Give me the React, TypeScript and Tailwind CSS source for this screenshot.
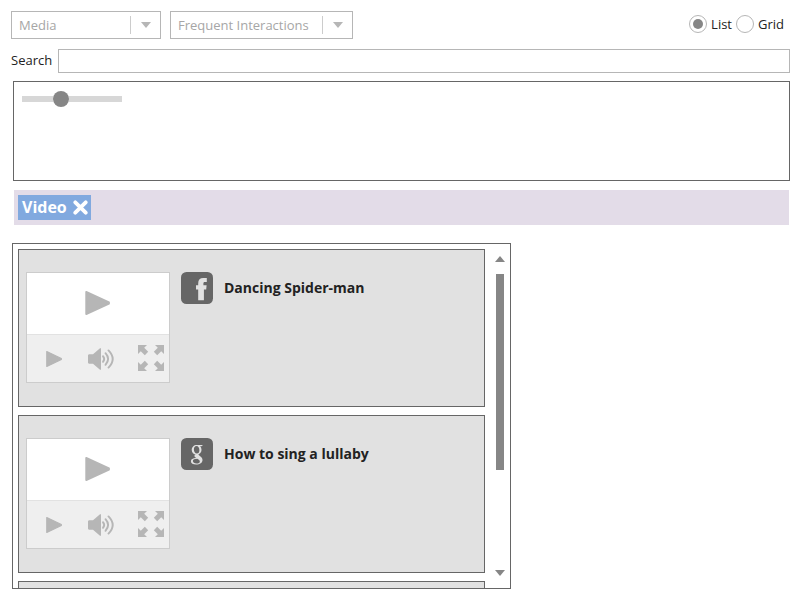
import React from "react";

function Caret({ up = false }: { up?: boolean }) {
  return (
    <svg width="10" height="6" viewBox="0 0 10 6" className="block">
      <path d={up ? "M0 6 5 0l5 6z" : "M0 0h10L5 6z"} fill="currentColor" />
    </svg>
  );
}

function Select({ label, width }: { label: string; width: string }) {
  return (
    <div className={`flex h-7 items-center border border-[#b6b6b6] pl-[7px] pr-[9px] text-[#a6a6a6] ${width}`}>
      <span className="flex-1 whitespace-nowrap">{label}</span>
      <span className="mr-2.5 h-[18px] w-px bg-[#ccc]" />
      <span className="text-[#b6b6b6]">
        <Caret />
      </span>
    </div>
  );
}

function Radio({ label, checked = false }: { label: string; checked?: boolean }) {
  return (
    <div className="flex items-center gap-1">
      <span className="flex h-[18px] w-[18px] items-center justify-center rounded-full border border-[#b6b6b6]">
        {checked && <span className="h-2.5 w-2.5 rounded-full bg-[#868686]" />}
      </span>
      <span>{label}</span>
    </div>
  );
}

function Play({ width, height }: { width: number; height: number }) {
  return (
    <svg width={width} height={height} viewBox="0 0 25 24" preserveAspectRatio="none" className="block">
      <path d="M1.2 0.9v22.2L24 12.7v-1.4z" fill="currentColor" stroke="currentColor" strokeWidth="1.8" strokeLinejoin="round" />
    </svg>
  );
}

function Speaker() {
  return (
    <svg width="27" height="22" viewBox="0 0 27 22" className="block">
      <path d="M0.8 6.2H5L12 0.3h1v21.400h-1L5 15.800H0.8L0 14.800v-7.600z" fill="currentColor" />
      <g fill="none" stroke="currentColor" strokeWidth="1.9" strokeLinecap="round">
        <path d="M15 8.200q2.400 2.800 0 5.600" />
        <path d="M17.500 5.200q5.200 5.800 0 11.600" />
        <path d="M20.500 2.400q8.400 8.600 0 17.200" />
      </g>
    </svg>
  );
}

function Expand() {
  return (
    <svg width="26" height="26" viewBox="0 0 26 26" fill="currentColor" className="block">
      <path d="M0 0h9L6.200 2.800l4 4-3.400 3.400-4-4L0 9z" />
      <path d="M26 0h-9l2.800 2.800-4 4 3.400 3.400 4-4L26 9z" />
      <path d="M0 26h9l-2.800-2.800 4-4-3.400-3.400-4 4L0 17z" />
      <path d="M26 26h-9l2.800-2.800-4-4 3.400-3.400 4 4L26 17z" />
    </svg>
  );
}

function FacebookIcon() {
  return (
    <svg width="32" height="32" viewBox="0 0 32 32" className="block shrink-0">
      <rect width="32" height="32" rx="5.500" fill="#666" />
      <path d="M17.200 28.300V17.500H15v-4.200h2.200v-2C17.200 7.800 19 6 22.200 6H25.800v4h-2c-1.100 0-1.400.5-1.400 1.600v1.700h3.200l-.4 4.200h-2.300v10.800z" fill="#e1e1e1" />
    </svg>
  );
}

function GoogleIcon() {
  return (
    <svg width="32" height="32" viewBox="0 0 32 32" className="block shrink-0">
      <rect width="32" height="32" rx="5.500" fill="#666" />
      <g fill="#e1e1e1" fillRule="evenodd">
        <path d="M15.800 7C12.800 7 10.700 9.100 10.700 12c0 2.600 1.900 4.600 4.700 4.600 3.100 0 5.100-2.100 5.100-4.900C20.500 8.900 18.600 7 15.800 7zm-.3 1c1.700 0 2.900 1.900 2.900 4.200 0 2-.9 3.400-2.600 3.400s-2.900-1.900-2.900-4.100c0-2 .9-3.500 2.600-3.500z" />
        <path d="M15.500 7H22l-1.500 1.200H18z" />
        <path d="M14.400 16.200c-1.100 1-1.300 1.900-.5 2.700l1.400 1.200c-3.500.1-5.400 1.200-5.400 3.100 0 2.100 2 3.300 5.200 3.300 3.900 0 6.400-1.900 6.400-4.600 0-1.500-.8-2.600-2-3.500l-1.500-1.200c-.9-.7-.7-1.200.4-2zM16.300 20.800c1.700 1 2.500 1.700 2.500 2.600 0 1.400-1.200 2.200-3.200 2.200-2.200 0-3.700-1-3.700-2.500s1.500-2.300 4.400-2.300z" />
      </g>
    </svg>
  );
}

function VideoPreview() {
  return (
    <div className="flex h-[111px] w-36 shrink-0 flex-col border border-[#ccc] bg-white text-[#b6b6b6]">
      <div className="flex h-[61px] pl-[58px] pt-[18px]">
        <Play width={25} height={24} />
      </div>
      <div className="flex flex-1 items-center border-t border-[#e2e2e2] bg-[#efefef] pl-[19px]">
        <Play width={16} height={16} />
        <div className="ml-[26px]">
          <Speaker />
        </div>
        <div className="ml-[23px] pb-0.5">
          <Expand />
        </div>
      </div>
    </div>
  );
}

function MediaItem({ icon, title }: { icon: React.ReactNode; title: string }) {
  return (
    <article className="flex h-[158px] w-[467px] shrink-0 items-start border border-[#666] bg-[#e1e1e1] pl-[7px] pt-[22px]">
      <VideoPreview />
      <div className="ml-[11px] flex items-center gap-[11px]">
        {icon}
        <h2 className="whitespace-nowrap text-sm font-bold">{title}</h2>
      </div>
    </article>
  );
}

export default function App() {
  return (
    <main className="h-[600px] w-[800px] overflow-hidden bg-white pt-[11px] font-['Open_Sans',sans-serif] text-[13px] leading-5 text-[#222]">
      <header className="flex pl-[11px] pr-4">
        <Select label="Media" width="w-[150px]" />
        <div className="ml-[9px]">
          <Select label="Frequent Interactions" width="w-[183px]" />
        </div>
        <div className="ml-auto flex h-[26px] items-center gap-1">
          <Radio label="List" checked />
          <Radio label="Grid" />
        </div>
      </header>

      <label className="mt-2.5 flex h-6 items-center pl-[11px]">
        <span className="w-[47px] pb-0.5">Search</span>
        <input className="h-6 w-[732px] border border-[#b6b6b6] outline-none" />
      </label>

      <section className="ml-[13px] mt-2 h-[100px] w-[777px] border border-[#666] pl-2 pt-[9px]">
        <div className="flex h-4 w-[100px] items-center">
          <span className="h-1.5 w-[31px] bg-[#d7d7d7]" />
          <span className="h-4 w-4 rounded-full bg-[#868686]" />
          <span className="h-1.5 flex-1 bg-[#d7d7d7]" />
        </div>
      </section>

      <div className="ml-3.5 mt-[9px] flex h-[35px] w-[775px] items-start bg-[#e3dce8] pl-1 pt-[5px]">
        <div className="flex h-[25px] w-[73px] items-center bg-[#81a9df] pl-1 text-base font-bold text-white">
          <span className="w-[51px] pb-0.5">Video</span>
          <svg width="15" height="15" viewBox="0 0 15 15">
            <path d="M2.300 2.300 12.700 12.700M12.700 2.300 2.300 12.700" stroke="currentColor" strokeWidth="3.800" strokeLinecap="round" />
          </svg>
        </div>
      </div>

      <section className="ml-3 mt-[18px] flex h-[346px] w-[499px] overflow-hidden border border-[#666] pl-[5px]">
        <div className="flex flex-col gap-2 overflow-hidden pt-[5px]">
          <MediaItem icon={<FacebookIcon />} title="Dancing Spider-man" />
          <MediaItem icon={<GoogleIcon />} title="How to sing a lullaby" />
          <div className="h-[158px] w-[467px] shrink-0 border border-[#666] bg-[#e1e1e1]" />
        </div>
        <div className="ml-2.5 flex w-2.5 flex-col items-center pt-3 text-[#868686]">
          <Caret up />
          <div className="mt-3 h-[196px] w-2 bg-[#868686]" />
          <div className="mt-[100px]">
            <Caret />
          </div>
        </div>
      </section>
    </main>
  );
}
